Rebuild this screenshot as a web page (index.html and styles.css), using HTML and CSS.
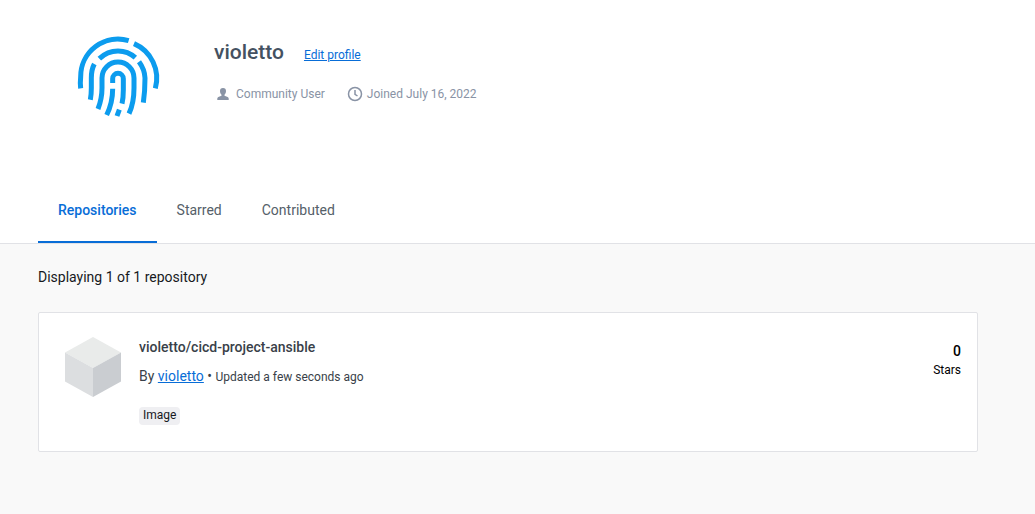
FILE: index.html
```html
<!DOCTYPE html>
<html lang="en">
<head>
<meta charset="utf-8">
<title>violetto's Profile</title>
<link rel="stylesheet" href="styles.css">
</head>
<body>
<header class="profile">
  <svg class="avatar" viewBox="30 27 240 240" aria-hidden="true">
    <path d="M38 181Q36 165 38 146A112 112 0 0 1 182 38"/>
    <path d="M198 47A113 113 0 0 1 262 181"/>
    <path d="M94 92Q118 69 150 69Q180 69 202 89"/>
    <path d="M79 108Q70 125 70 150V180Q70 200 67 215"/>
    <path d="M213 101Q230 124 231 150Q231 190 226 224"/>
    <path d="M90 243Q102 212 102 180V150A48 48 0 0 1 198 150V180Q198 225 183 257"/>
    <path d="M134 165V152A16 16 0 0 1 166 152V185Q166 210 162 227"/>
    <path d="M134 182Q134 224 116 261"/>
    <path d="M154 245L147 264"/>
  </svg>
  <div class="identity">
    <div class="name-row">
      <h1 class="name">violetto</h1>
      <a class="edit" href="#">Edit profile</a>
    </div>
    <div class="meta">
      <span class="meta-item">
        <svg class="icon-user" viewBox="0 0 12 14" aria-hidden="true"><path d="M6 1C3.900 1 3 2.300 3 4.100C3 5.700 3.700 7 4.500 7.700V8.700L1.300 10Q0.300 10.500 0.300 11.500V13H11.700V11.500Q11.700 10.500 10.700 10L7.500 8.700V7.700C8.300 7 9 5.700 9 4.100C9 2.300 8.100 1 6 1Z"/></svg>
        Community User
      </span>
      <span class="meta-item">
        <svg class="icon-clock" viewBox="0 0 16 16" aria-hidden="true"><circle cx="8" cy="8" r="6.500"/><path d="M8 4V8.300L10.500 10"/></svg>
        Joined July 16, 2022
      </span>
    </div>
  </div>
</header>
<nav class="tabs">
  <a class="tab active" href="#">Repositories</a>
  <a class="tab" href="#">Starred</a>
  <a class="tab" href="#">Contributed</a>
</nav>
<main class="content">
  <p class="count">Displaying 1 of 1 repository</p>
  <article class="card">
    <svg class="cube" viewBox="0 0 56 60" aria-hidden="true">
      <path fill="#e9ebea" d="M28 0L56 15.500L28 31L0 15.500Z"/>
      <path fill="#dcdee0" d="M0 15.500L28 31V60L0 44.500Z"/>
      <path fill="#cacdd1" d="M56 15.500L28 31V60L56 44.500Z"/>
    </svg>
    <div class="details">
      <h2 class="repo">violetto/cicd-project-ansible</h2>
      <p class="byline">By <a href="#">violetto</a> • <span class="updated">Updated a few seconds ago</span></p>
      <span class="badge">Image</span>
    </div>
    <div class="stars"><strong class="stars-count">0</strong><span>Stars</span></div>
  </article>
</main>
</body>
</html>
```
FILE: styles.css
```css
* { box-sizing: border-box; }
html { background: #f9f9f9; }
body {
  margin: 0;
  font-family: Roboto, "Liberation Sans", sans-serif;
  font-size: 14px;
  line-height: 20px;
  color: #17191e;
}
h1, h2, p { margin: 0; }
a { color: #086dd7; }

.profile {
  display: flex;
  gap: 56px;
  min-height: 178px;
  padding: 37px 78px 0;
  background: #fff;
}
.avatar {
  width: 80px;
  height: 80px;
  overflow: visible;
  fill: none;
  stroke: #0c9cee;
  stroke-width: 15px;
}
.name-row {
  display: flex;
  align-items: baseline;
  gap: 20px;
}
.name {
  font-size: 21px;
  font-weight: 500;
  line-height: 30px;
  color: #445161;
}
.edit { font-size: 12px; }
.meta {
  display: flex;
  gap: 22px;
  margin-top: 17px;
  padding-left: 2px;
  font-size: 12px;
  color: #8993a5;
}
.meta-item {
  display: flex;
  align-items: center;
  gap: 4px;
}
.icon-user {
  width: 12px;
  height: 14px;
  margin: 0 3px 0 1px;
  fill: #8993a5;
}
.icon-clock {
  width: 16px;
  height: 16px;
  fill: none;
  stroke: #8993a5;
  stroke-width: 1.5px;
}

.tabs {
  display: flex;
  padding: 0 38px;
  background: #fff;
  border-bottom: 1px solid #e1e2e6;
}
.tab {
  padding: 22px 20px 21px;
  border-bottom: 2px solid transparent;
  color: #556069;
  text-decoration: none;
}
.active {
  color: #086dd7;
  border-color: #086dd7;
  font-weight: 500;
}

.content { padding: 23px 57px 40px 38px; }
.count { margin-bottom: 25px; }
.card {
  display: flex;
  align-items: flex-start;
  padding: 24px 16px 26px 26px;
  background: #fff;
  border: 1px solid #e1e2e6;
  border-radius: 2px;
}
.cube {
  width: 56px;
  height: 60px;
  margin-right: 18px;
}
.details { flex: 1; }
.repo {
  font-size: 14px;
  font-weight: 500;
  line-height: 20px;
  color: #393f49;
}
.byline {
  margin: 9px 0 20px;
  color: #393f49;
}
.updated { font-size: 12px; }
.badge {
  display: block;
  width: fit-content;
  padding: 0 4px 2px;
  background: #efeff2;
  border-radius: 4px;
  font-size: 12px;
  line-height: 16px;
}
.stars {
  display: flex;
  flex-direction: column;
  align-items: flex-end;
  padding-top: 5px;
  font-size: 12px;
  line-height: 18px;
  color: #000;
}
.stars-count {
  font-size: 14px;
  font-weight: 500;
  line-height: 19px;
}
```
